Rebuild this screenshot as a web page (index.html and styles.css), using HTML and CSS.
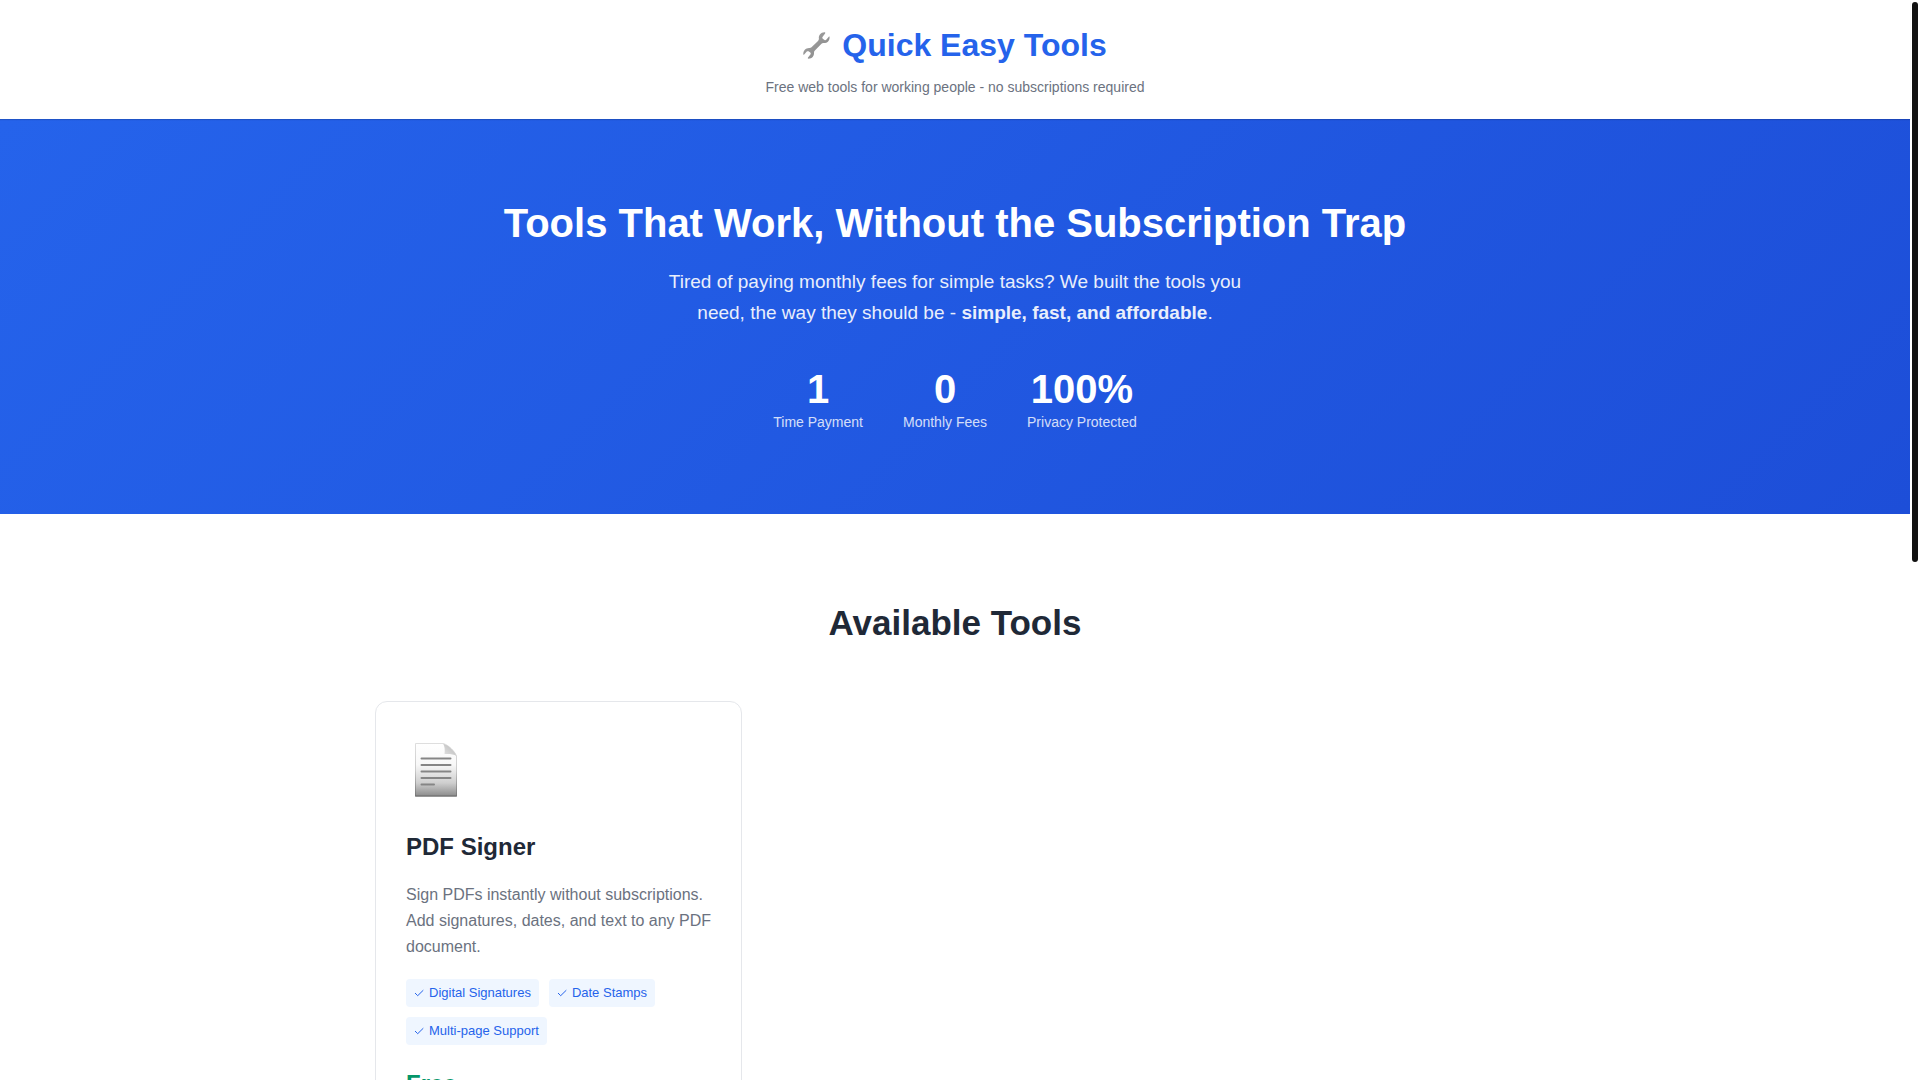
FILE: index.html
```
<!DOCTYPE html>
<html lang="en">
<head>
  <meta charset="UTF-8">
  <meta name="viewport" content="width=device-width, initial-scale=1.0">
  <title>Quick Easy Tools</title>
  <link rel="stylesheet" href="styles.css">
</head>
<body>
  <!-- Header -->
  <header class="header">
    <h1 class="logo">
      <svg class="logo-icon" viewBox="0 0 27 27" aria-hidden="true">
        <defs>
          <linearGradient id="steel" x1="0" y1="0" x2="1" y2="1">
            <stop offset="0" stop-color="#a6a6a6"/>
            <stop offset="1" stop-color="#858585"/>
          </linearGradient>
        </defs>
        <path fill="url(#steel)" d="M21.4 0.2C17.8 0.2 15.4 3.2 15.9 6.6C16 7.6 15.7 8.4 15 9.1L8.5 15.3C7.8 15.9 7.1 16.1 6.2 16C2.8 15.9 0.1 18.7 0.3 22.2C0.3 22.8 0.8 22.9 1.2 22.5L3.8 19.6C4.3 19.1 4.9 19 5.5 19.3L7.3 20.6C7.8 21 7.9 21.7 7.6 22.2L5 25.6C4.6 26.2 4.8 26.6 5.5 26.7C9 26.7 11.3 24 11 20.8C10.9 19.9 11.2 19.1 11.9 18.4L18.5 11.8C19.1 11.2 19.8 11 20.7 11.1C24.3 11.2 26.8 8.4 26.6 4.9C26.5 4.4 26.1 4.3 25.8 4.7L23.2 7.8C22.8 8.3 22.1 8.4 21.5 8L19.8 6.7C19.3 6.3 19.1 5.6 19.5 5L22.1 1.4C22.5 0.8 22.2 0.2 21.4 0.2Z"/>
      </svg>
      Quick Easy Tools
    </h1>
    <p class="tagline">Free web tools for working people - no subscriptions required</p>
  </header>

  <!-- Hero -->
  <section class="hero">
    <h2 class="hero-title">Tools That Work, Without the Subscription Trap</h2>
    <p class="hero-text">Tired of paying monthly fees for simple tasks? We built the tools you need, the way they should be - <strong>simple, fast, and affordable</strong>.</p>
    <div class="stats">
      <div class="stat">
        <span class="stat-number">1</span>
        <span class="stat-label">Time Payment</span>
      </div>
      <div class="stat">
        <span class="stat-number">0</span>
        <span class="stat-label">Monthly Fees</span>
      </div>
      <div class="stat">
        <span class="stat-number">100%</span>
        <span class="stat-label">Privacy Protected</span>
      </div>
    </div>
  </section>

  <!-- Tools -->
  <main class="tools">
    <h2 class="section-title">Available Tools</h2>
    <div class="tools-grid">
      <article class="tool-card">
        <svg class="tool-icon" viewBox="0 0 60 60" aria-hidden="true">
          <defs>
            <linearGradient id="paper" x1="0" y1="0" x2="0" y2="1">
              <stop offset="0" stop-color="#ffffff"/>
              <stop offset="0.4" stop-color="#f8f8f8"/>
              <stop offset="0.75" stop-color="#cfcfcf"/>
              <stop offset="1" stop-color="#8c8c8c"/>
            </linearGradient>
            <linearGradient id="edge" x1="0" y1="0" x2="0" y2="1">
              <stop offset="0" stop-color="#dedede"/>
              <stop offset="0.5" stop-color="#cccccc"/>
              <stop offset="1" stop-color="#777777"/>
            </linearGradient>
            <linearGradient id="fold" x1="0" y1="1" x2="1" y2="0">
              <stop offset="0" stop-color="#e4e4e4"/>
              <stop offset="1" stop-color="#b4b4b4"/>
            </linearGradient>
          </defs>
          <path fill="url(#paper)" stroke="url(#edge)" d="M9.500 3.500H37.500C43 5.500 48.500 11 50.500 16V56H9.500Z"/>
          <path fill="url(#fold)" d="M37 3.500C43 5.500 48.500 11 50.500 16C48 14 43 13.800 38.500 14C39 10 38.800 6 37 3.500Z"/>
          <path fill="none" stroke="#858585" stroke-width="2" stroke-linecap="round" d="M15.500 18.500H44.500M15.500 25H44.500M15.500 31.500H44.500M15.500 38H44.500M15.500 44.500H28"/>
          <path stroke="#737373" d="M9 56H51"/>
        </svg>
        <h3 class="tool-name">PDF Signer</h3>
        <p class="tool-text">Sign PDFs instantly without subscriptions. Add signatures, dates, and text to any PDF document.</p>
        <ul class="features">
          <li class="feature"><svg class="check" viewBox="0 0 10 8" aria-hidden="true"><path d="M1 4L3.700 6.700L9.300 1.200"/></svg>Digital Signatures</li>
          <li class="feature"><svg class="check" viewBox="0 0 10 8" aria-hidden="true"><path d="M1 4L3.700 6.700L9.300 1.200"/></svg>Date Stamps</li>
          <li class="feature"><svg class="check" viewBox="0 0 10 8" aria-hidden="true"><path d="M1 4L3.700 6.700L9.300 1.200"/></svg>Multi-page Support</li>
        </ul>
        <div class="price">Free</div>
      </article>
    </div>
  </main>

  <div class="scroll-thumb"></div>
</body>
</html>
```
FILE: styles.css
```
* {
  margin: 0;
  padding: 0;
  box-sizing: border-box;
}

html {
  scrollbar-width: none;
}

body {
  padding-right: 10px;
  background: #fff;
  color: #1f2937;
  font-family: "Liberation Sans", Arial, sans-serif;
  font-size: 16px;
  line-height: 26px;
}

/* Header */
.header {
  position: relative;
  padding: 20px;
  background: #fff;
  text-align: center;
  box-shadow: 0 1px 1px rgba(0, 0, 0, 0.15);
}

.logo {
  display: flex;
  justify-content: center;
  align-items: center;
  gap: 12px;
  margin-bottom: 5px;
  color: #2563eb;
  font-size: 32px;
  line-height: 51px;
}

.logo-icon {
  width: 27px;
  height: 27px;
}

.tagline {
  color: #6b7280;
  font-size: 14px;
  line-height: 23px;
}

/* Hero */
.hero {
  padding: 80px 20px;
  background: linear-gradient(135deg, #2563eb 0%, #1d4ed8 100%);
  color: #fff;
  text-align: center;
}

.hero-title {
  margin-bottom: 19px;
  font-size: 40px;
  line-height: 48px;
}

.hero-text {
  max-width: 600px;
  margin: 0 auto 40px;
  font-size: 19px;
  line-height: 31px;
  opacity: 0.9;
}

.stats {
  display: flex;
  justify-content: center;
  flex-wrap: wrap;
  gap: 40px;
}

.stat-number {
  display: block;
  font-size: 40px;
  font-weight: bold;
  line-height: 42px;
}

.stat-label {
  display: block;
  font-size: 14px;
  line-height: 24px;
  opacity: 0.8;
}

/* Tools */
.tools {
  max-width: 1200px;
  margin: 0 auto;
  padding: 80px 20px;
}

.section-title {
  margin-bottom: 50px;
  font-size: 35px;
  line-height: 57px;
  text-align: center;
}

.tools-grid {
  display: grid;
  grid-template-columns: repeat(auto-fill, minmax(350px, 1fr));
  gap: 30px;
}

.tool-card {
  padding: 30px 24px 30px 30px;
  border: 1px solid #e5e7eb;
  border-radius: 12px;
}

.tool-icon {
  display: block;
  width: 60px;
  height: 60px;
  margin: 8px 0 28px;
}

.tool-name {
  margin-bottom: 16px;
  font-size: 24px;
  line-height: 38px;
}

.tool-text {
  margin-bottom: 19px;
  color: #6b7280;
}

.features {
  display: flex;
  flex-wrap: wrap;
  gap: 10px;
  margin-bottom: 20px;
  list-style: none;
}

.feature {
  display: flex;
  align-items: center;
  gap: 5px;
  padding: 4px 8px;
  border-radius: 4px;
  background: #eff6ff;
  color: #2563eb;
  font-size: 13px;
  line-height: 20px;
}

.check {
  width: 10px;
  height: 8px;
  fill: none;
  stroke: currentColor;
}

.price {
  color: #059669;
  font-size: 24px;
  font-weight: bold;
  line-height: 38px;
}

/* Page scroll indicator */
.scroll-thumb {
  position: fixed;
  top: 2px;
  right: 2px;
  bottom: 48vh;
  width: 6px;
  border-radius: 3px;
  background: #111;
}

@media (max-width: 768px) {
  .tools-grid {
    grid-template-columns: 1fr;
  }

  .hero-title {
    font-size: 32px;
    line-height: 40px;
  }
}
```
